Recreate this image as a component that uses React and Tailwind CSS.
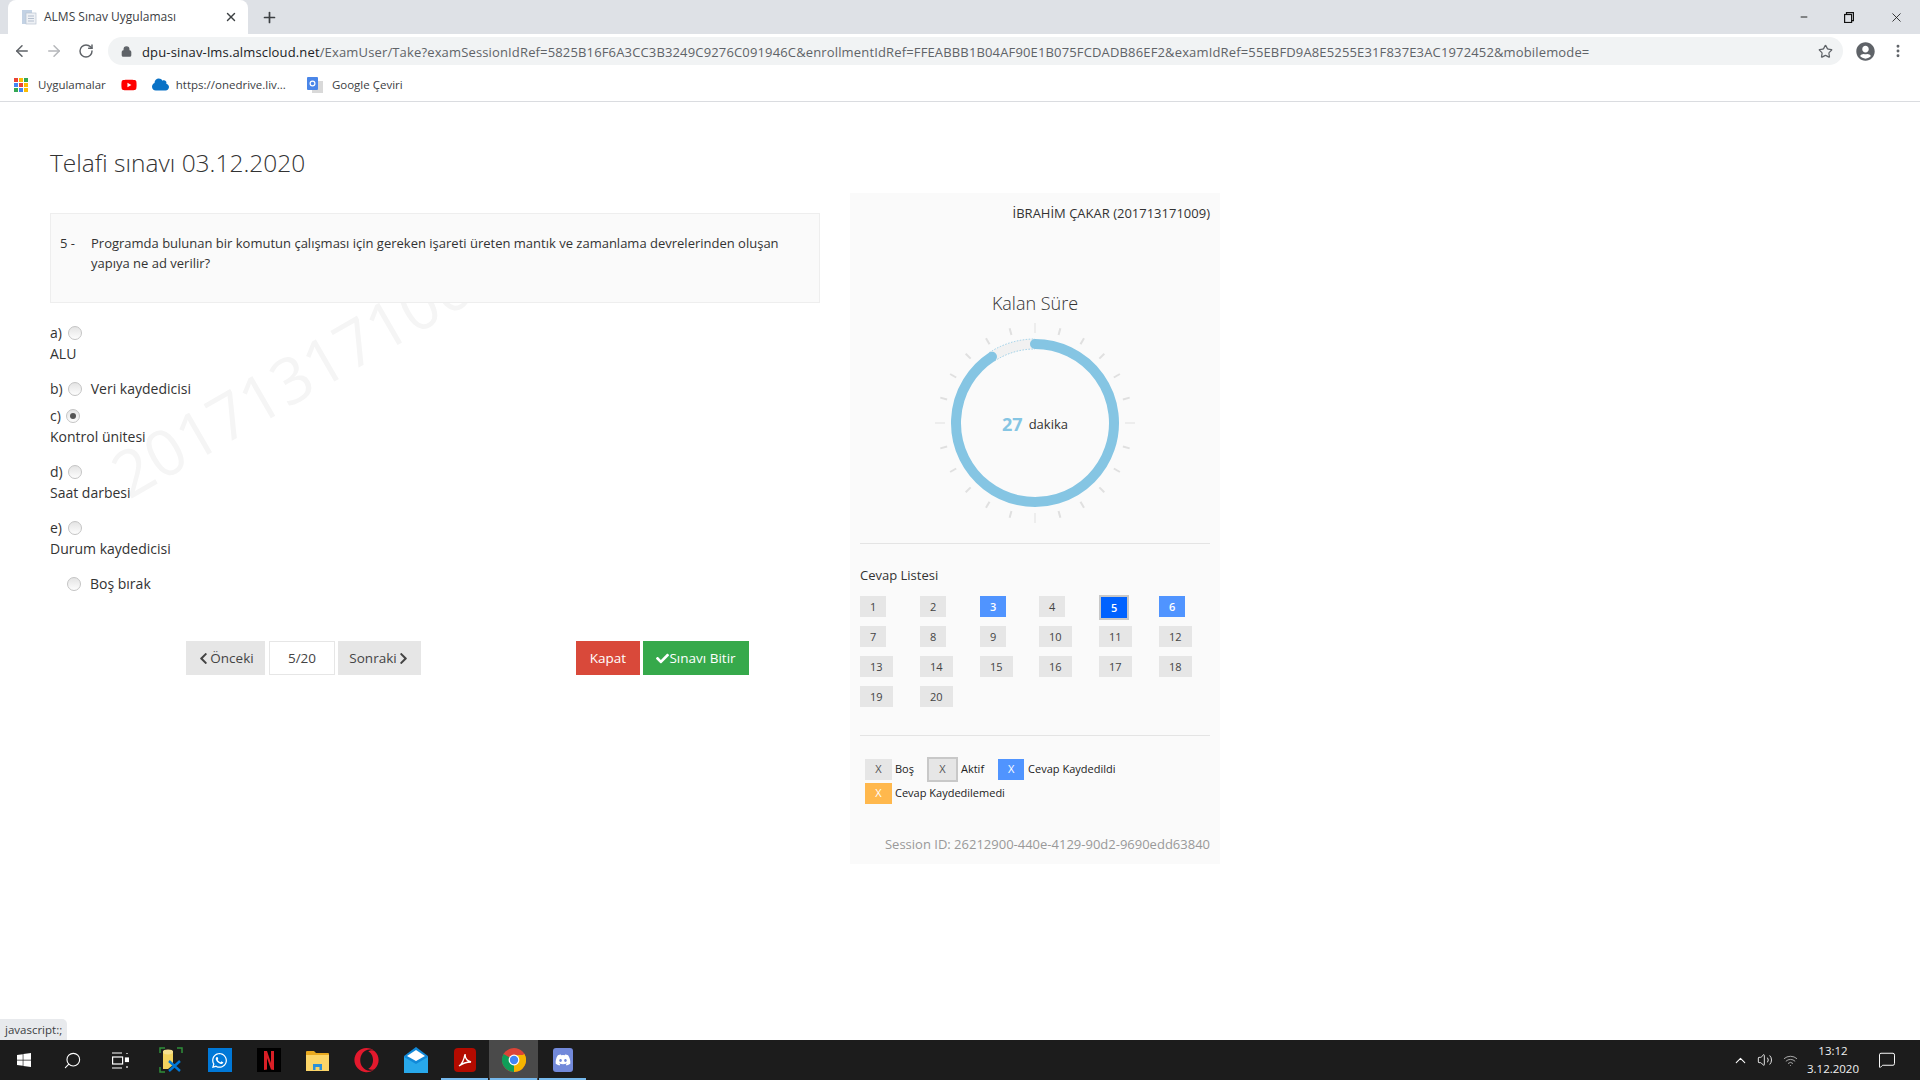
import React from "react";
import { ArrowLeft, ArrowRight, RotateCw, Lock, Star, EllipsisVertical, X, Plus, Minus, Search, ChevronUp, Volume2, Wifi, MessageSquare } from "lucide-react";
import { FaChevronLeft, FaChevronRight, FaCheck, FaUserCircle, FaYoutube, FaCloud, FaWindows, FaWhatsapp, FaOpera, FaDiscord } from "react-icons/fa";

const FONT = "font-['Open_Sans','Noto_Sans',sans-serif]";

function AppsIcon() {
  const c = ["#ea4335","#fbbc05","#34a853","#4285f4","#ea4335","#fbbc05","#34a853","#4285f4","#fbbc05"];
  return (
    <div className="grid grid-cols-3 gap-[1px] w-[14px] h-[14px]">
      {c.map((x, i) => <span key={i} style={{ background: x }} className="w-[4px] h-[4px]" />)}
    </div>
  );
}

function Radio({ checked, className = "" }) {
  return (
    <span className={`inline-flex items-center justify-center w-[14px] h-[14px] rounded-full border border-[#c4c4c4] bg-linear-to-b from-[#e4e4e4] to-[#fdfdfd] ${className}`}>
      {checked && <span className="w-[6px] h-[6px] rounded-full bg-[#555]" />}
    </span>
  );
}

function Option({ letter, text, inline, checked, mt, radioMl }) {
  const head = (
    <div className="h-[21px] flex items-center text-[14px] leading-[21px] text-[#333]">
      <span>{letter}</span>
      <Radio checked={checked} className={radioMl} />
      {inline && <span className="ml-[9px]">{text}</span>}
    </div>
  );
  return (
    <div className={mt}>
      {head}
      {!inline && <div className="h-[21px] text-[14px] leading-[21px] text-[#333]">{text}</div>}
    </div>
  );
}

function Ring() {
  const cx = 100, cy = 100, r = 79;
  const ticks = Array.from({ length: 24 }, (_, i) => i * 15);
  const a = (-33 * Math.PI) / 180;
  const ex = cx + r * Math.sin(a), ey = cy - r * Math.cos(a);
  const p = (rad) => `M ${cx + rad * Math.sin(a)} ${cy - rad * Math.cos(a)} A ${rad} ${rad} 0 0 1 ${cx} ${cy - rad}`;
  return (
    <svg width="200" height="200" viewBox="0 0 200 200" className="block">
      {ticks.map((d) => {
        const major = d % 90 === 0;
        const rad = (d * Math.PI) / 180;
        const r1 = major ? 90 : 91, r2 = major ? 100 : 98;
        return (
          <line key={d} x1={cx + r1 * Math.sin(rad)} y1={cy - r1 * Math.cos(rad)} x2={cx + r2 * Math.sin(rad)} y2={cy - r2 * Math.cos(rad)} stroke="#e0e0e0" strokeWidth={major ? 1 : 2} />
        );
      })}
      <path d={p(79)} fill="none" stroke="#f1f1f1" strokeWidth="10" />
      <path d={p(84)} fill="none" stroke="#85c5e3" strokeWidth="0.8" strokeDasharray="1.5 1.5" />
      <path d={p(74)} fill="none" stroke="#85c5e3" strokeWidth="0.8" strokeDasharray="1.5 1.5" />
      <path d={`M ${cx} ${cy - r} A ${r} ${r} 0 1 1 ${ex} ${ey}`} fill="none" stroke="#85c5e3" strokeWidth="10" strokeLinecap="round" />
    </svg>
  );
}

function Cell({ n, kind }) {
  const base = "flex items-center justify-center w-fit h-[21px] px-[10px] text-[11px] leading-none";
  if (kind === "active")
    return <div className={`${base} box-content border-2 border-[#c8c8c8] bg-[#0062ff] text-white font-semibold -ml-0 -mt-px`}>{n}</div>;
  if (kind === "saved") return <div className={`${base} bg-[#5094ff] text-white font-semibold`}>{n}</div>;
  return <div className={`${base} bg-[#e6e6e6] text-[#444]`}>{n}</div>;
}

function Chrome2Icon() {
  return (
    <svg width="24" height="24" viewBox="0 0 24 24">
      <circle cx="12" cy="12" r="12" fill="#db4437" />
      <path d="M12 12 L1.6 6 A12 12 0 0 0 12 24 Z" fill="#0f9d58" />
      <path d="M12 12 L12 24 A12 12 0 0 0 22.4 6 Z" fill="#f4b400" />
      <path d="M12 7 H22.4 A12 12 0 0 1 23.5 9.5 L12 12 Z" fill="#f4b400" />
      <circle cx="12" cy="12" r="5.4" fill="#fff" />
      <circle cx="12" cy="12" r="4.2" fill="#4285f4" />
    </svg>
  );
}

function TaskItem({ children, active, bar }) {
  return (
    <div className={`relative h-[40px] w-[49px] flex items-center justify-center ${active ? "bg-[#4a4a4a]" : ""}`}>
      {children}
      {bar && <span className="absolute left-[1px] right-[1px] bottom-0 h-[2px] bg-[#76b9ed]" />}
    </div>
  );
}

export default function App() {
  const cells = [
    [1],[2],[3,"saved"],[4],[5,"active"],[6,"saved"],
    [7],[8],[9],[10],[11],[12],
    [13],[14],[15],[16],[17],[18],
    [19],[20],
  ];
  return (
    <div className={`w-[1920px] h-[1080px] overflow-hidden flex flex-col bg-white ${FONT}`}>
      {/* tab strip */}
      <div className="h-[34px] shrink-0 bg-[#dee1e6] flex items-end pl-[8px]">
        <div className="w-[240px] h-[34px] bg-white rounded-t-[8px] flex items-center pl-[13px] pr-[10px]">
          <svg width="16" height="16" viewBox="0 0 16 16" className="shrink-0">
            <rect x="1" y="1" width="10" height="14" fill="#c3d2e4" />
            <rect x="5" y="4" width="10" height="11" fill="#eef1f5" stroke="#b9c4d2" strokeWidth="0.7" />
            <path d="M7 7h6M7 9.5h6M7 12h6" stroke="#a5b3c4" strokeWidth="0.8" />
          </svg>
          <span className="ml-[7px] text-[12px] text-[#3c4043] leading-none">ALMS Sınav Uygulaması</span>
          <X size={14} strokeWidth={2.4} className="ml-auto text-[#3c4043]" />
        </div>
        <Plus size={17} strokeWidth={2.4} className="ml-[13px] mb-[8px] text-[#3c4043]" />
        <div className="ml-auto h-[34px] flex items-center text-[#111]">
          <Minus size={10} strokeWidth={2.2} className="mr-[35px]" />
          <svg width="10" height="11" viewBox="0 0 10 11" className="mr-[35px]" fill="none" stroke="#111" strokeWidth="1.2"><rect x="0.6" y="2.5" width="7" height="8" /><path d="M2.5 2.5V0.6h7v8H7.5" /></svg>
          <X size={15} strokeWidth={1.3} className="mr-[16px]" />
        </div>
      </div>
      {/* toolbar */}
      <div className="h-[34px] shrink-0 bg-white flex items-center pl-[13px]">
        <ArrowLeft size={18} strokeWidth={2} className="text-[#5f6368]" />
        <ArrowRight size={18} strokeWidth={2} className="ml-[14px] text-[#b5b7ba]" />
        <RotateCw size={16} strokeWidth={2.2} className="ml-[15px] text-[#5f6368]" />
        <div className="ml-[14px] w-[1735px] h-[28px] rounded-full bg-[#f1f3f4] flex items-center pl-[13px] pr-[10px]">
          <Lock size={11} strokeWidth={3} fill="#5f6368" className="text-[#5f6368] shrink-0" />
          <span className="ml-[10px] pt-[2px] text-[13px] leading-none whitespace-nowrap text-[#5f6368] tracking-[0.15px]">
            <span className="text-[#202124]">dpu-sinav-lms.almscloud.net</span>/ExamUser/Take?examSessionIdRef=5825B16F6A3CC3B3249C9276C091946C&amp;enrollmentIdRef=FFEABBB1B04AF90E1B075FCDADB86EF2&amp;examIdRef=55EBFD9A8E5255E31F837E3AC1972452&amp;mobilemode=
          </span>
          <Star size={15} strokeWidth={2} className="ml-auto text-[#5f6368] shrink-0" />
        </div>
        <FaUserCircle size={19} className="ml-[13px] text-[#5f6368]" />
        <EllipsisVertical size={16} strokeWidth={2.4} className="ml-[15px] text-[#5f6368]" />
      </div>
      {/* bookmarks */}
      <div className="h-[34px] shrink-0 bg-white border-b border-[#dadce0] flex items-center pl-[14px] text-[11.5px] text-[#3c4043]">
        <AppsIcon />
        <span className="ml-[10px]">Uygulamalar</span>
        <FaYoutube size={16} className="ml-[15px] text-[#f00]" />
        <FaCloud size={17} className="ml-[15px] text-[#0a72c6]" />
        <span className="ml-[7px]">https://onedrive.liv...</span>
        <svg width="18" height="18" viewBox="0 0 18 18" className="ml-[20px]">
          <rect x="6" y="5" width="11" height="12" fill="#d9d9d9" />
          <rect x="1" y="1" width="11" height="13" rx="1" fill="#4a86e8" />
          <circle cx="6.5" cy="7.5" r="2.4" fill="none" stroke="#fff" strokeWidth="1.2" />
        </svg>
        <span className="ml-[8px]">Google Çeviri</span>
      </div>
      {/* page */}
      <div className="relative flex-1 min-h-0 bg-white">
        <div className="absolute left-[133px] top-[341px] origin-bottom-left -rotate-[30deg] text-[64px] leading-none text-[#f5f5f5] whitespace-nowrap select-none">201713171009</div>
        <div className="relative pl-[50px]">
          <h1 className="pt-[44px] h-[91px] text-[24.5px] leading-[34px] text-[#333] font-light">Telafi sınavı 03.12.2020</h1>
          <div className="flex items-start">
            <div className="w-[770px] pt-[20px]">
              <div className="h-[90px] bg-[#fafafa] border border-[#eeeeee] flex pl-[9px] pt-[19px] text-[13px] leading-[20px] text-[#333]">
                <span className="w-[31px] shrink-0">5 -</span>
                <span className="w-[700px]">Programda bulunan bir komutun çalışması için gereken işareti üreten mantık ve zamanlama devrelerinden oluşan yapıya ne ad verilir?</span>
              </div>
              <Option letter="a)" text="ALU" mt="mt-[19px]" radioMl="ml-[6px]" />
              <Option letter="b)" text="Veri kaydedicisi" inline mt="mt-[14px]" radioMl="ml-[5px]" />
              <Option letter="c)" text="Kontrol ünitesi" checked mt="mt-[6px]" radioMl="ml-[5px]" />
              <Option letter="d)" text="Saat darbesi" mt="mt-[14px]" radioMl="ml-[5px]" />
              <Option letter="e)" text="Durum kaydedicisi" mt="mt-[14px]" radioMl="ml-[6px]" />
              <div className="mt-[14px] h-[21px] flex items-center text-[14px] text-[#333] pl-[17px]">
                <Radio />
                <span className="ml-[9px]">Boş bırak</span>
              </div>
              <div className="mt-[47px] h-[34px] flex items-stretch text-[13.5px]">
                <div className="ml-[136px] w-[79px] bg-[#e6e6e6] text-[#444] flex items-center justify-center"><FaChevronLeft size={13} />Önceki</div>
                <div className="ml-[4px] w-[66px] border border-[#e6e6e6] text-[#444] flex items-center justify-center">5/20</div>
                <div className="ml-[3px] w-[83px] bg-[#e6e6e6] text-[#444] flex items-center justify-center">Sonraki<FaChevronRight size={13} /></div>
                <div className="ml-[155px] w-[64px] bg-[#d9493a] text-white flex items-center justify-center">Kapat</div>
                <div className="ml-[3px] w-[106px] bg-[#36a94b] text-white flex items-center justify-center"><FaCheck size={13} />Sınavı Bitir</div>
              </div>
            </div>
            <div className="ml-[30px] w-[370px] h-[671px] bg-[#fafafa] px-[10px] flex flex-col">
              <div className="h-[40px] pt-[10px] text-right text-[13px] leading-[20px] text-[#333]">İBRAHİM ÇAKAR (201713171009)</div>
              <div className="mt-[56px] h-[28px] text-center text-[18px] leading-[28px] text-[#333] font-light">Kalan Süre</div>
              <div className="relative mt-[6px] h-[200px] flex justify-center">
                <Ring />
                <div className="absolute inset-0 pt-[3px] flex items-center justify-center text-[13px] text-[#333]">
                  <span className="text-[18px] font-bold text-[#85c5e3] mr-[6px]">27</span>dakika
                </div>
              </div>
              <div className="mt-[20px] h-px bg-[#e4e4e4]" />
              <div className="mt-[21px] h-[20px] text-[13px] leading-[20px] text-[#333]">Cevap Listesi</div>
              <div className="mt-[11px] grid grid-cols-[60px_60px_59px_60px_60px_1fr] auto-rows-[21px] gap-y-[9px] h-[111px]">
                {cells.map(([n, k]) => <Cell key={n} n={n} kind={k} />)}
              </div>
              <div className="mt-[28px] h-px bg-[#e4e4e4]" />
              <div className="mt-[23px] pl-[5px] text-[11px] text-[#222]">
                <div className="h-[21px] flex items-center">
                  <span className="w-[27px] h-[21px] bg-[#e6e6e6] text-[#555] flex items-center justify-center">X</span>
                  <span className="ml-[3px]">Boş</span>
                  <span className="ml-[13px] w-[31px] h-[25px] box-border border-2 border-[#c8c8c8] bg-[#e6e6e6] text-[#555] flex items-center justify-center">X</span>
                  <span className="ml-[3px]">Aktif</span>
                  <span className="ml-[14px] w-[26px] h-[21px] bg-[#5094ff] text-white flex items-center justify-center">X</span>
                  <span className="ml-[4px]">Cevap Kaydedildi</span>
                </div>
                <div className="mt-[3px] h-[21px] flex items-center">
                  <span className="w-[27px] h-[21px] bg-[#ffb84d] text-white flex items-center justify-center">X</span>
                  <span className="ml-[3px]">Cevap Kaydedilemedi</span>
                </div>
              </div>
              <div className="mt-[30px] text-right text-[13px] leading-[20px] text-[#999]">Session ID: 26212900-440e-4129-90d2-9690edd63840</div>
            </div>
          </div>
        </div>
        <div className="absolute left-0 bottom-0 h-[21px] w-[67px] bg-[#e8eaed] rounded-tr-[5px] flex items-center pl-[5px] text-[11.5px] text-[#3c4043] whitespace-nowrap">javascript:;</div>
      </div>
      {/* taskbar */}
      <div className="h-[40px] shrink-0 bg-[#1c1c1c] flex items-center text-white">
        <div className="w-[48px] flex justify-center"><FaWindows size={16} /></div>
        <div className="w-[48px] flex justify-center"><Search size={19} strokeWidth={1.4} className="-scale-x-100" /></div>
        <div className="w-[48px] flex justify-center">
          <svg width="17" height="17" viewBox="0 0 17 17" fill="none" stroke="#fff" strokeWidth="1.2"><path d="M0 1h10M0 16h10" /><rect x="0.6" y="5" width="10" height="7" /><path d="M15 1v1" /><rect x="13.5" y="6" width="3" height="3.5" fill="#fff" /><path d="M15 14v2" /></svg>
        </div>
        <div className="w-[2px]" />
        <TaskItem>
          <svg width="24" height="26" viewBox="0 0 24 26">
            <path d="M1 6V1h5M18 1h5v5M1 20v5h5" fill="none" stroke="#2f8f3a" strokeWidth="1.5" />
            <path d="M4 4h10v14l-5 4H4z" fill="#f4d35e" />
            <ellipse cx="9" cy="5" rx="5" ry="2.4" fill="#f8e08e" />
            <path d="M10 14l11 10M21 14L10 24" stroke="#0078d7" strokeWidth="2.4" />
          </svg>
        </TaskItem>
        <TaskItem><span className="w-[24px] h-[24px] bg-[#0078d7] flex items-center justify-center"><FaWhatsapp size={17} className="text-[#fff]" /></span></TaskItem>
        <TaskItem>
          <span className="w-[24px] h-[24px] bg-black flex items-center justify-center">
            <svg width="10" height="19" viewBox="0 0 10 19"><path d="M0 0h3l4 12V0h3v19l-3-.4L3 7v11.6L0 19z" fill="#d81f26" /></svg>
          </span>
        </TaskItem>
        <TaskItem>
          <svg width="23" height="21" viewBox="0 0 23 21"><path d="M0 2a1 1 0 0 1 1-1h7l2 2h12a1 1 0 0 1 1 1v16H0z" fill="#e8a920" /><rect x="0" y="5" width="23" height="16" fill="#fbd568" /><path d="M7 20v-6h9v6h-2.5v-3h-4v3z" fill="#2b90d9" /></svg>
        </TaskItem>
        <TaskItem><FaOpera size={25} className="text-[#e3192d]" /></TaskItem>
        <TaskItem>
          <svg width="24" height="26" viewBox="0 0 24 26"><path d="M0 9 12 0l12 9v17H0z" fill="#1289d8" /><path d="M3 9 12 14l9-5-9-6z" fill="#fff" /><path d="M0 10l12 7 12-7v16H0z" fill="#28a8ea" /></svg>
        </TaskItem>
        <TaskItem bar>
          <span className="w-[22px] h-[24px] rounded-[4px] bg-[#b30b00] flex items-center justify-center">
            <svg width="16" height="16" viewBox="0 0 16 16" fill="none" stroke="#fff" strokeWidth="1.4"><path d="M2 14c3-2 5-6 6-12 0 4 2 7 6 8-4 0-8 1-12 4z" /></svg>
          </span>
        </TaskItem>
        <TaskItem active bar><Chrome2Icon /></TaskItem>
        <TaskItem bar>
          <span className="w-[20px] h-[24px] rounded-[3px] bg-[#7289da] flex items-center justify-center"><FaDiscord size={16} className="text-white" /></span>
        </TaskItem>
        <div className="ml-auto flex items-center h-full">
          <ChevronUp size={17} strokeWidth={1.5} className="mr-[8px]" />
          <Volume2 size={16} strokeWidth={1.3} className="mr-[10px]" />
          <Wifi size={15} strokeWidth={1.4} className="mr-[7px] text-[#bbb]" />
          <div className="w-[56px] text-center text-[11.5px] leading-[18px] text-[#f0f0f0]">
            <div>13:12</div>
            <div>3.12.2020</div>
          </div>
          <MessageSquare size={18} strokeWidth={1.3} className="ml-[17px] mr-[24px]" />
        </div>
      </div>
    </div>
  );
}
